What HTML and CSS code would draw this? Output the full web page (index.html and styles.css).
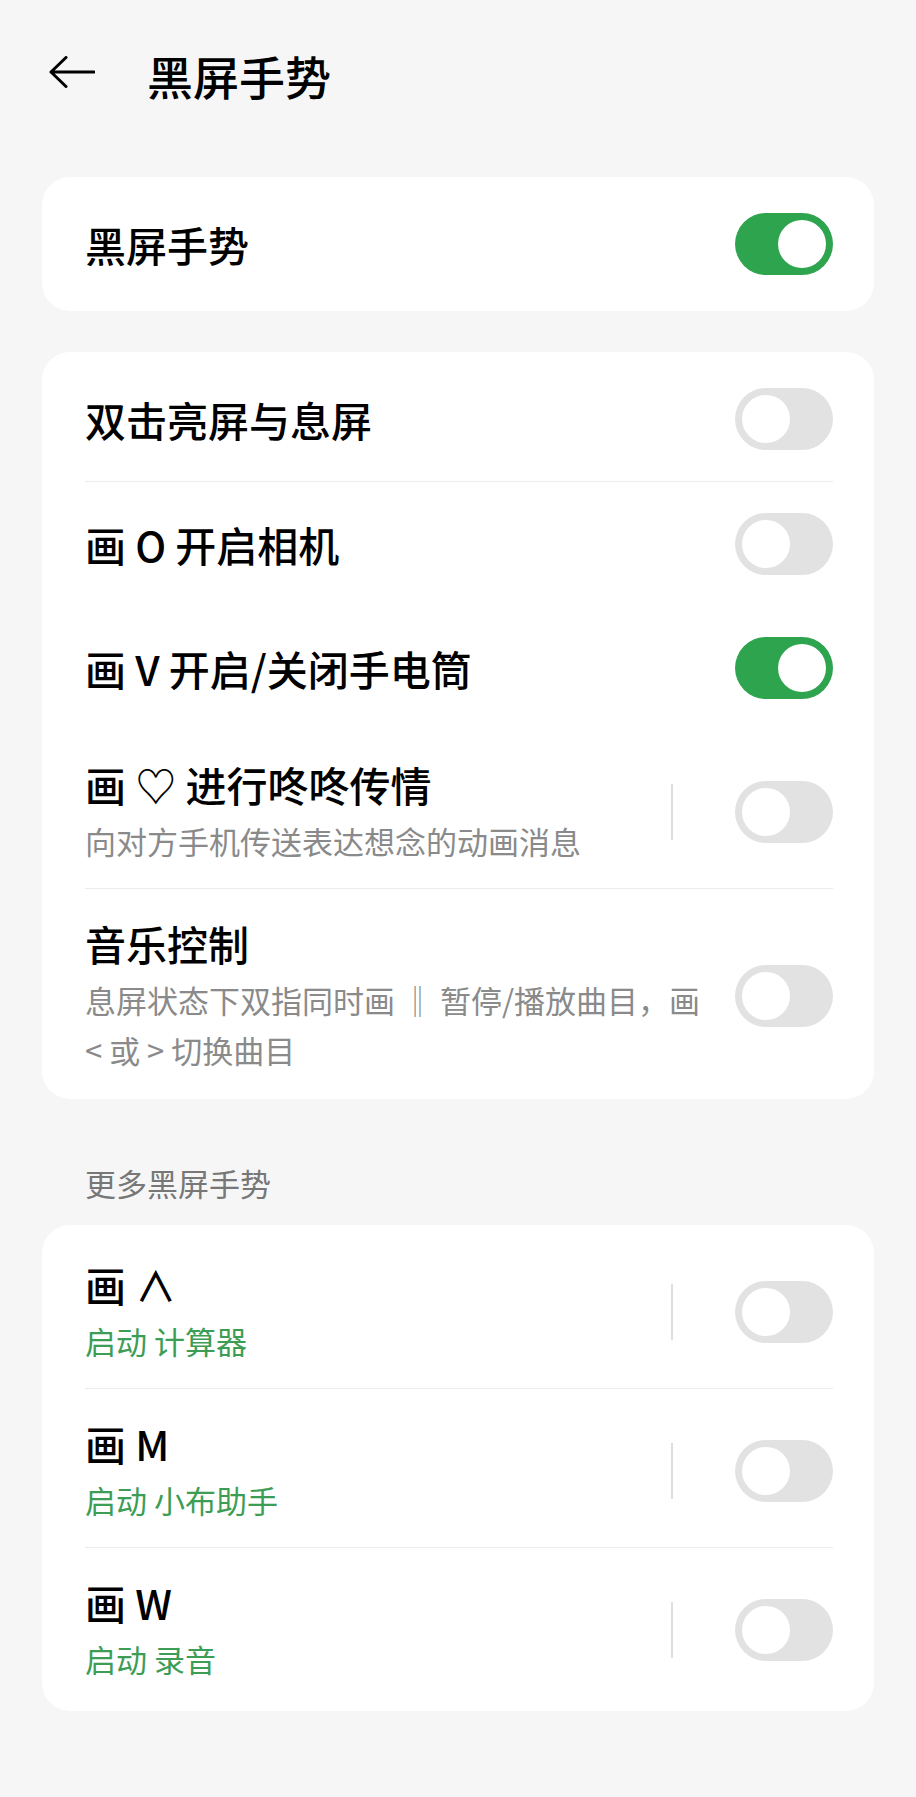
FILE: index.html
```html
<!DOCTYPE html>
<html lang="zh-CN">
<head>
  <meta charset="UTF-8" />
  <meta name="viewport" content="width=device-width, initial-scale=1.0"/>
  <title>黑屏手势</title>
  <link rel="stylesheet" href="styles.css">
</head>
<body>

  <div class="top-bar">
    <svg class="back" width="46" height="32" viewBox="0 0 46 32">
      <path d="M2 16 H45 M17 1.5 L2 16 L17 30.5" fill="none" stroke="#000" stroke-width="3" stroke-linecap="round" stroke-linejoin="round"/>
    </svg>
    <h1>黑屏手势</h1>
  </div>

  <div class="card first">
    <div class="row">
      <div class="text"><div class="title">黑屏手势</div></div>
      <span class="switch on"></span>
    </div>
  </div>

  <div class="card">
    <div class="row">
      <div class="text"><div class="title">双击亮屏与息屏</div></div>
      <span class="switch"></span>
    </div>
    <div class="divider"></div>
    <div class="row">
      <div class="text"><div class="title">画 O 开启相机</div></div>
      <span class="switch"></span>
    </div>
    <div class="row">
      <div class="text"><div class="title">画 V 开启/关闭手电筒</div></div>
      <span class="switch on"></span>
    </div>
    <div class="row tall">
      <div class="text">
        <div class="title">画 ♡ 进行咚咚传情</div>
        <div class="sub">向对方手机传送表达想念的动画消息</div>
      </div>
      <span class="sep"></span>
      <span class="switch"></span>
    </div>
    <div class="divider"></div>
    <div class="row tall last">
      <div class="text">
        <div class="title">音乐控制</div>
        <div class="sub">息屏状态下双指同时画 ‖ 暂停/播放曲目，画<br>&lt; 或 &gt; 切换曲目</div>
      </div>
      <span class="switch"></span>
    </div>
  </div>

  <div class="section-label">更多黑屏手势</div>

  <div class="card">
    <div class="row tall">
      <div class="text">
        <div class="title">画 ∧</div>
        <div class="sub green">启动 计算器</div>
      </div>
      <span class="sep"></span>
      <span class="switch"></span>
    </div>
    <div class="divider"></div>
    <div class="row tall">
      <div class="text">
        <div class="title">画 M</div>
        <div class="sub green">启动 小布助手</div>
      </div>
      <span class="sep"></span>
      <span class="switch"></span>
    </div>
    <div class="divider"></div>
    <div class="row tall">
      <div class="text">
        <div class="title">画 W</div>
        <div class="sub green">启动 录音</div>
      </div>
      <span class="sep"></span>
      <span class="switch"></span>
    </div>
  </div>

</body>
</html>
```

FILE: styles.css
```css
body {
  margin: 0;
  background-color: #f6f6f6;
  color: #000;
  font-family: "Noto Sans CJK SC", "Noto Sans", sans-serif;
}

.top-bar {
  height: 150px;
  display: flex;
  align-items: center;
  padding-left: 49px;
}

.back {
  margin-top: -6px;
}

.top-bar h1 {
  margin: 0 0 0 52px;
  font-size: 46px;
  font-weight: 500;
  line-height: 60px;
}

.card {
  background-color: #fff;
  border-radius: 28px;
  margin: 0 42px 41px;
  padding: 5px 0;
}

.card.first {
  margin-top: 27px;
}

.row {
  display: flex;
  align-items: center;
  min-height: 124px;
  padding: 0 41px 0 43px;
  box-sizing: border-box;
}

.row.tall {
  padding-top: 28px;
  padding-bottom: 22px;
}

.row.last {
  padding-bottom: 19px;
}

.text {
  flex: 1;
}

.title {
  font-size: 41px;
  font-weight: 500;
  line-height: 52px;
}

.sub {
  margin-top: 6px;
  font-size: 31px;
  line-height: 50px;
  color: #8a8a8a;
}

.sub.green {
  color: #3e9d55;
}

.divider {
  height: 1px;
  background-color: #ececec;
  margin: 0 41px 0 43px;
}

.sep {
  width: 2px;
  height: 56px;
  background-color: #dedede;
  margin-right: 62px;
}

.switch {
  position: relative;
  width: 98px;
  height: 62px;
  border-radius: 31px;
  background-color: #e2e2e2;
  flex-shrink: 0;
}

.switch::after {
  content: "";
  position: absolute;
  top: 7px;
  left: 7px;
  width: 48px;
  height: 48px;
  border-radius: 50%;
  background-color: #fff;
}

.switch.on {
  background-color: #2ea44f;
}

.switch.on::after {
  left: 43px;
}

.section-label {
  margin: 64px 0 22px 85px;
  font-size: 31px;
  line-height: 40px;
  color: #777;
}
```
